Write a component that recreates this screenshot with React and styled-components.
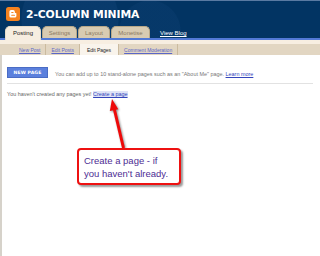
import React from "react";
import styled, { createGlobalStyle } from "styled-components";

const Global = createGlobalStyle`
  html, body { margin: 0; padding: 0; background: #fff; }
  body { width: 320px; height: 256px; overflow: hidden; font-family: "Liberation Sans", Arial, sans-serif; }
`;

const Page = styled.div`
  position: relative;
  width: 320px;
  height: 256px;
  display: flex;
  flex-direction: column;
  background: #fff;
`;

const Header = styled.header`
  height: 38px;
  box-sizing: border-box;
  border-top: 1px solid #5a7aa2;
  background:
    radial-gradient(circle at 70px 18px, rgba(40, 90, 150, 0.18) 0 48px, transparent 49px),
    radial-gradient(circle at 150px 30px, rgba(40, 90, 150, 0.12) 0 30px, transparent 31px),
    #023463;
  display: flex;
  flex-direction: column;
`;

const TitleRow = styled.div`
  display: flex;
  align-items: center;
  gap: 6px;
  margin: 6px 0 0 6px;
  height: 14px;
`;

const Title = styled.h1`
  margin: 0;
  color: #fff;
  font-family: "DejaVu Sans", Verdana, sans-serif;
  font-weight: bold;
  font-size: 10.8px;
  letter-spacing: -0.1px;
`;

const TabRow = styled.nav`
  margin-top: auto;
  display: flex;
  align-items: flex-end;
  gap: 1px;
  padding-left: 5px;
`;

const Tab = styled.div`
  width: ${(p) => p.$w}px;
  height: ${(p) => (p.$active ? 14 : 12)}px;
  margin-bottom: ${(p) => (p.$active ? -2 : 0)}px;
  box-sizing: border-box;
  border: 1px solid ${(p) => (p.$active ? "#e8dcc8" : "#b9a888")};
  border-bottom: none;
  border-radius: 5px 5px 0 0;
  background: ${(p) => (p.$active ? "#f6ede0" : "#d8cbb2")};
  color: ${(p) => (p.$active ? "#222" : "#8a7a62")};
  font-size: 6px;
  display: flex;
  justify-content: center;
  padding-top: 3px;
  position: relative;
  z-index: 1;
`;

const ViewBlog = styled.a`
  color: #fff;
  font-size: 6px;
  text-decoration: underline;
  margin: 0 0 2px 9px;
`;

const Stripe = styled.div`
  height: 2px;
  background: #5279d6;
`;

const CreamBand = styled.div`
  height: 4px;
  background: #f7eee1;
`;

const SubBar = styled.div`
  height: 11px;
  background: #e2d6c2;
  display: flex;
  padding-left: 14px;
`;

const SubTab = styled.a`
  display: flex;
  align-items: center;
  padding: 0 ${(p) => p.$pad}px;
  border-right: 1px solid #cbbb9f;
  background: ${(p) => (p.$active ? "#f9f4ec" : "transparent")};
  color: ${(p) => (p.$active ? "#222" : "#5a66c8")};
  text-decoration: ${(p) => (p.$active ? "none" : "underline")};
  font-size: 5px;
  white-space: nowrap;
`;

const Content = styled.main`
  flex: 1;
  border-left: 2px solid #d6d2ca;
  padding: 12px 7px 0 5px;
  display: flex;
  flex-direction: column;
`;

const ActionRow = styled.div`
  display: flex;
  align-items: center;
  gap: 7px;
`;

const Button = styled.button`
  width: 41px;
  height: 11px;
  padding: 0;
  border: 1px solid #4a6cc4;
  background: #5b80dd;
  color: #fff;
  font-family: "DejaVu Sans", Verdana, sans-serif;
  font-weight: bold;
  font-size: 4.6px;
  letter-spacing: 0.1px;
`;

const Note = styled.p`
  margin: 0;
  color: #777;
  font-size: 5.45px;
  white-space: nowrap;
  padding-top: 3px;
`;

const Link = styled.a`
  color: #3344bb;
  text-decoration: underline;
  background: ${(p) => (p.$hl ? "#dfe3f6" : "transparent")};
`;

const Rule = styled.hr`
  margin: 5px 0 0;
  border: none;
  border-top: 1px solid #e2e2e2;
`;

const Empty = styled.p`
  margin: 7px 0 0;
  color: #666;
  font-size: 5.45px;
  white-space: nowrap;
`;

const Arrow = styled.svg`
  position: absolute;
  left: 0;
  top: 0;
  width: 320px;
  height: 256px;
  pointer-events: none;
  filter: drop-shadow(1px 1px 0.8px rgba(0, 0, 0, 0.45));
`;

const Callout = styled.div`
  position: absolute;
  left: 77px;
  top: 148px;
  width: 104px;
  height: 37px;
  box-sizing: border-box;
  border: 2px solid #ee1111;
  border-radius: 4px;
  background: #fff;
  box-shadow: 2px 2px 2px rgba(0, 0, 0, 0.4);
  padding: 4px 0 0 5px;
  color: #4d2d93;
  font-family: "Liberation Sans", Tahoma, sans-serif;
  font-size: 9.5px;
  line-height: 13px;
`;

const BloggerLogo = () => (
  <svg width="14" height="14" viewBox="0 0 14 14">
    <rect x="0" y="0" width="14" height="14" rx="2.5" fill="#f5821f" />
    <path
      d="M3.4 4.6 a1.6 1.6 0 0 1 1.6 -1.6 h2.2 a1.6 1.6 0 0 1 1.6 1.6 v0.7 a0.6 0.6 0 0 0 0.6 0.6 h0.4 a0.6 0.6 0 0 1 0.6 0.6 v2.5 a1.6 1.6 0 0 1 -1.6 1.6 h-3.8 a1.6 1.6 0 0 1 -1.6 -1.6 z"
      fill="#fff"
    />
    <rect x="5.2" y="5" width="2.4" height="1.1" rx="0.55" fill="#f5821f" />
    <rect x="5.2" y="7.7" width="3.8" height="1.1" rx="0.55" fill="#f5821f" />
  </svg>
);

const tabs = [
  { label: "Posting", w: 36, active: true },
  { label: "Settings", w: 35 },
  { label: "Layout", w: 32 },
  { label: "Monetise", w: 39 },
];

const subTabs = [
  { label: "New Post", pad: 5 },
  { label: "Edit Posts", pad: 5 },
  { label: "Edit Pages", pad: 7, active: true },
  { label: "Comment Moderation", pad: 5 },
];

export default function App() {
  return (
    <>
      <Global />
      <Page>
        <Header>
          <TitleRow>
            <BloggerLogo />
            <Title>2-COLUMN MINIMA</Title>
          </TitleRow>
          <TabRow>
            {tabs.map((t) => (
              <Tab key={t.label} $w={t.w} $active={t.active}>
                {t.label}
              </Tab>
            ))}
            <ViewBlog>View Blog</ViewBlog>
          </TabRow>
        </Header>
        <Stripe />
        <CreamBand />
        <SubBar>
          {subTabs.map((s) => (
            <SubTab key={s.label} $pad={s.pad} $active={s.active}>
              {s.label}
            </SubTab>
          ))}
        </SubBar>
        <Content>
          <ActionRow>
            <Button>NEW PAGE</Button>
            <Note>
              You can add up to 10 stand-alone pages such as an "About Me" page.{" "}
              <Link>Learn more</Link>
            </Note>
          </ActionRow>
          <Rule />
          <Empty>
            You haven't created any pages yet! <Link $hl>Create a page</Link>
          </Empty>
        </Content>
        <Arrow viewBox="0 0 320 256">
          <line x1="123.5" y1="148" x2="113.8" y2="107" stroke="#ee0a0a" strokeWidth="3" />
          <polygon points="112,99 118.3,109.2 109.8,110.9" fill="#ee0a0a" />
        </Arrow>
        <Callout>
          Create a page - if
          <br />
          you haven't already.
        </Callout>
      </Page>
    </>
  );
}
